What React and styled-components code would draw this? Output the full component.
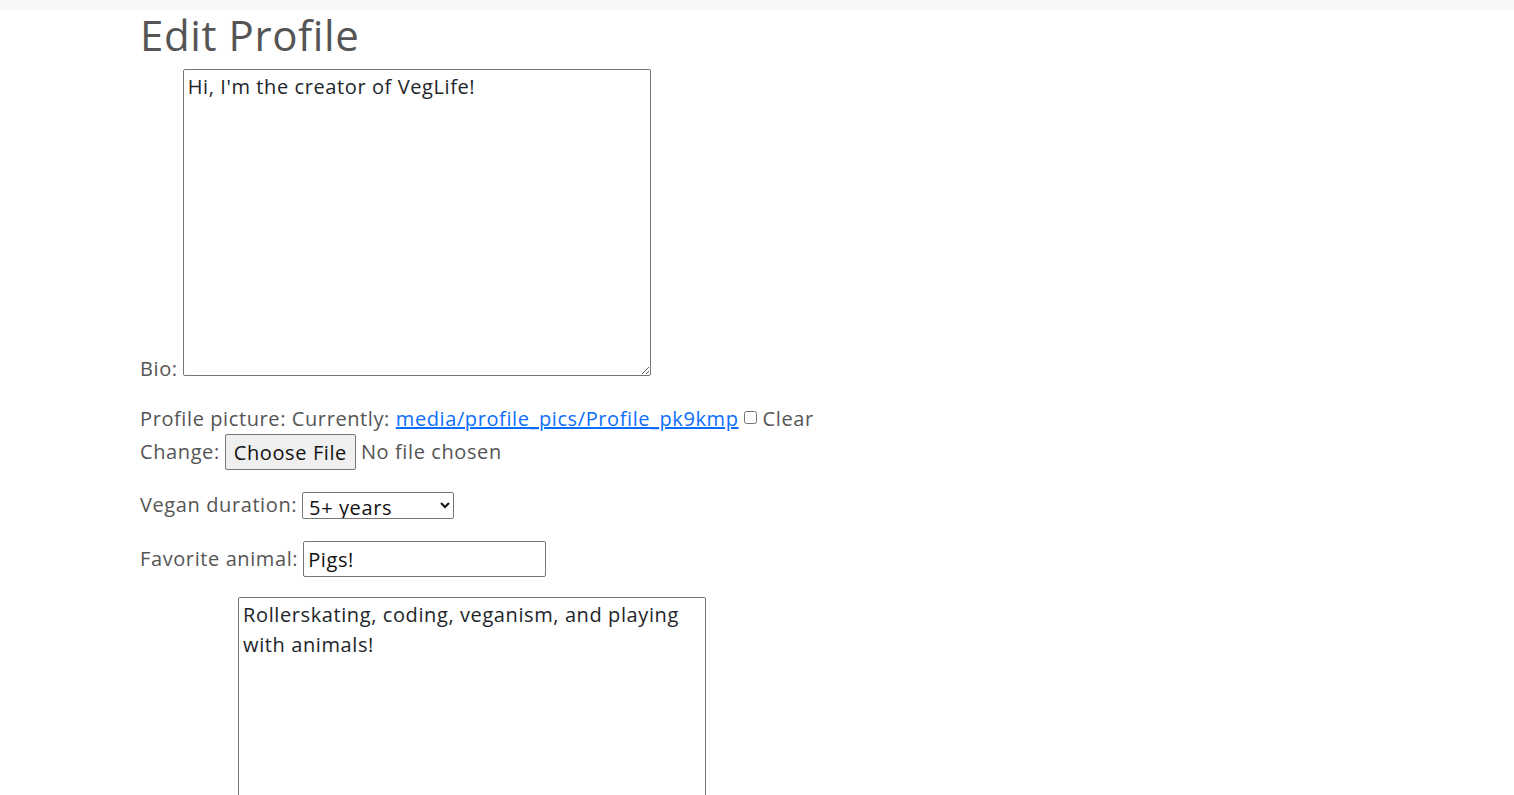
import React from "react";
import styled, { createGlobalStyle } from "styled-components";

const GlobalStyle = createGlobalStyle`
  body {
    margin: 0;
    background: #fff;
    font-family: "Open Sans", "Liberation Sans", sans-serif;
    color: #555;
    font-size: 20px;
    letter-spacing: 0.6px;
    line-height: 1.5;
  }
`;

const TopBar = styled.div`
  height: 10px;
  background: #f7f8fa;
`;

const Container = styled.main`
  padding-left: 140px;
`;

const Heading = styled.h1`
  margin: 0 0 9px;
  font-size: 42px;
  font-weight: 400;
  letter-spacing: 0.6px;
  line-height: 50px;
  color: #555;
`;

const Field = styled.div`
  display: flex;
  align-items: ${(p) => (p.$bottom ? "flex-end" : "center")};
  gap: 5px;
  margin-bottom: ${(p) => p.$mb || 16}px;
`;

const Block = styled.div`
  margin-bottom: ${(p) => p.$mb || 16}px;
`;

const Label = styled.label`
  white-space: nowrap;
  line-height: ${(p) => p.$lh || 30}px;
`;

const TextArea = styled.textarea`
  box-sizing: border-box;
  width: 468px;
  height: 307px;
  padding: 2px 4px;
  border: 1px solid #767676;
  border-radius: 2px;
  font-family: inherit;
  font-size: 20px;
  letter-spacing: 0.6px;
  line-height: 30px;
  color: #212529;
  resize: both;
`;

const Link = styled.a`
  color: #0d6efd;
  text-decoration: underline;
`;

const Check = styled.input`
  width: 13px;
  height: 13px;
  margin: 0 6px 0 5px;
  position: relative;
  top: -2px;
`;

const FileButton = styled.button`
  box-sizing: border-box;
  height: 36px;
  padding: 0 8px;
  border: 1px solid #767676;
  border-radius: 2px;
  background: #efefef;
  font-family: inherit;
  font-size: 20px;
  letter-spacing: 0.6px;
  color: #111;
`;

const Select = styled.select`
  box-sizing: border-box;
  width: 152px;
  height: 27px;
  padding: 0 2px;
  border: 1px solid #767676;
  border-radius: 2px;
  background: #fff;
  font-family: inherit;
  font-size: 20px;
  letter-spacing: 0.6px;
  color: #111;
`;

const TextInput = styled.input`
  box-sizing: border-box;
  width: 243px;
  height: 36px;
  padding: 0 4px;
  border: 1px solid #767676;
  border-radius: 2px;
  font-family: inherit;
  font-size: 20px;
  letter-spacing: 0.6px;
  color: #111;
`;

const Line = styled.div`
  display: flex;
  align-items: center;
  gap: ${(p) => p.$gap || 0}px;
  line-height: 30px;
`;

export default function App() {
  return (
    <>
      <GlobalStyle />
      <TopBar />
      <Container>
        <Heading>Edit Profile</Heading>
        <form>
          <Field $bottom $mb={28}>
            <Label htmlFor="bio" $lh={14}>Bio:</Label>
            <TextArea id="bio" defaultValue="Hi, I'm the creator of VegLife!" />
          </Field>

          <Block $mb={20}>
            <Line>
              Profile picture: Currently:&nbsp;
              <Link href="#">media/profile_pics/Profile_pk9kmp</Link>
              <Check type="checkbox" id="clear" />
              <label htmlFor="clear">Clear</label>
            </Line>
            <Line $gap={5}>
              Change:
              <FileButton type="button">Choose File</FileButton>
              <span>No file chosen</span>
            </Line>
          </Block>

          <Field $mb={21}>
            <Label htmlFor="duration">Vegan duration:</Label>
            <Select id="duration" defaultValue="5">
              <option value="1">Less than 1 year</option>
              <option value="3">1-5 years</option>
              <option value="5">5+ years</option>
            </Select>
          </Field>

          <Field $mb={20}>
            <Label htmlFor="animal">Favorite animal:</Label>
            <TextInput id="animal" defaultValue="Pigs!" />
          </Field>

          <Field $bottom>
            <Label htmlFor="hobbies" $lh={14}>Interests:</Label>
            <TextArea
              id="hobbies"
              defaultValue="Rollerskating, coding, veganism, and playing with animals!"
            />
          </Field>
        </form>
      </Container>
    </>
  );
}
